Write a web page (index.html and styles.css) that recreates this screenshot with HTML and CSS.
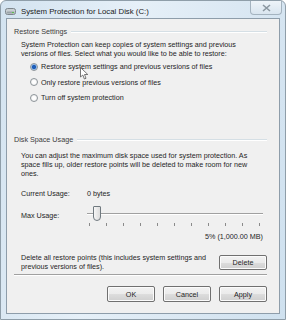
FILE: index.html
```html
<!DOCTYPE html>
<html lang="en">
<head>
    <meta charset="UTF-8">
    <title>System Protection for Local Disk (C:)</title>
    <link rel="stylesheet" href="styles.css">
</head>
<body>
    <div class="window">
        <div class="titlebar">
            <svg class="drive-icon" width="11" height="7" viewBox="0 0 11 7">
                <rect x="0.5" y="0.5" width="10" height="6" rx="2" fill="#c9cfd3" stroke="#7d868c"/>
                <rect x="1.5" y="3.5" width="8" height="2" rx="1" fill="#9aa3a8"/>
                <rect x="7" y="4" width="2" height="1" fill="#5cc04c"/>
            </svg>
            <span class="title">System Protection for Local Disk (C:)</span>
            <div class="close">
                <svg width="9" height="8" viewBox="0 0 9 8">
                    <path d="M1 1 L8 7 M8 1 L1 7" stroke="#8a96a0" stroke-width="1.6"/>
                </svg>
            </div>
        </div>

        <div class="client">
            <div class="group-head">
                <span>Restore Settings</span>
                <div class="rule"></div>
            </div>
            <p class="text">System Protection can keep copies of system settings and previous versions of files. Select what you would like to be able to restore:</p>

            <div class="options">
                <label class="option"><span class="radio checked"></span>Restore system settings and previous versions of files</label>
                <label class="option"><span class="radio"></span>Only restore previous versions of files</label>
                <label class="option"><span class="radio"></span>Turn off system protection</label>
            </div>

            <div class="group-head disk">
                <span>Disk Space Usage</span>
                <div class="rule"></div>
            </div>
            <p class="text disk-text">You can adjust the maximum disk space used for system protection. As space fills up, older restore points will be deleted to make room for new ones.</p>

            <div class="usage-row">
                <span class="field-label">Current Usage:</span>
                <span>0 bytes</span>
            </div>

            <div class="usage-row max">
                <span class="field-label">Max Usage:</span>
                <div class="slider">
                    <div class="track"></div>
                    <div class="thumb"></div>
                    <div class="ticks">
                        <i></i><i></i><i></i><i></i><i></i><i></i><i></i><i></i><i></i><i></i><i></i>
                    </div>
                </div>
            </div>
            <div class="percent">5% (1,000.00 MB)</div>

            <div class="delete-row">
                <p class="text">Delete all restore points (this includes system settings and previous versions of files).</p>
                <button class="btn">Delete</button>
            </div>

            <div class="separator"></div>

            <div class="buttons">
                <button class="btn">OK</button>
                <button class="btn">Cancel</button>
                <button class="btn">Apply</button>
            </div>
        </div>

        <svg class="cursor" width="9" height="13" viewBox="0 0 9 13">
            <path d="M0.5 0.5 L0.5 10 L2.8 8 L4.4 12 L6 11.3 L4.5 7.5 L7.8 7.5 Z" fill="#fff" stroke="#555" stroke-width="0.8"/>
        </svg>
    </div>
</body>
</html>
```

FILE: styles.css
```css
* {
    margin: 0;
    padding: 0;
    box-sizing: border-box;
}

body {
    font-family: 'Liberation Sans', Arial, sans-serif;
    font-size: 7.2px;
    color: #1e1e1e;
    background: #ffffff;
}

.window {
    position: relative;
    width: 286px;
    height: 320px;
    background: linear-gradient(100deg, #d3e3f0 0%, #e6f0f8 40%, #dbe8f3 70%, #cfe1ef 100%);
    border: 1px solid #8f9ea9;
    border-radius: 6px 6px 0 0;
    display: flex;
    flex-direction: column;
}

.titlebar {
    height: 17px;
    display: flex;
    align-items: center;
    padding-left: 4px;
}

.drive-icon {
    margin-top: 3px;
}

.title {
    margin-left: 5px;
    margin-top: 3px;
    font-size: 7.8px;
    color: #1a1a1a;
}

.close {
    margin-left: auto;
    margin-right: 3px;
    align-self: flex-start;
    width: 32px;
    height: 14px;
    border: 1px solid #a4b3bf;
    border-top: none;
    border-radius: 0 0 4px 4px;
    background: linear-gradient(#eef4f9, #d9e5ef);
    display: flex;
    align-items: center;
    justify-content: center;
}

.client {
    margin: 0 5px 0 5px;
    height: 296px;
    background: #f0f0f0;
    border: 1px solid #8e9daa;
    padding: 8px 12px 0 7px;
    display: flex;
    flex-direction: column;
}

.group-head {
    display: flex;
    align-items: center;
    height: 9px;
    color: #3c3c3c;
}

.group-head .rule {
    flex: 1;
    margin-left: 4px;
    border-top: 1px solid #d5dfe5;
    border-bottom: 1px solid #ffffff;
}

.text {
    margin-left: 7px;
    margin-top: 4px;
    max-width: 233px;
    line-height: 9px;
    color: #1e1e1e;
}

.disk-text {
    margin-top: 7px;
}

.options {
    margin-top: 4px;
    margin-left: 16px;
    display: flex;
    flex-direction: column;
    gap: 6.5px;
}

.option {
    display: flex;
    align-items: center;
    height: 9px;
}

.radio {
    width: 8px;
    height: 8px;
    border-radius: 50%;
    border: 1px solid #8d9499;
    background: radial-gradient(circle, #ffffff 30%, #e4e6e8 100%);
    margin-right: 3px;
}

.radio.checked {
    background: radial-gradient(circle, #1d5db8 0 1.8px, #8fb9ea 2.4px, #e7eef6 100%);
}

.group-head.disk {
    margin-top: 33px;
}

.usage-row {
    display: flex;
    align-items: center;
    margin-left: 7px;
    margin-top: 11px;
    height: 9px;
}

.field-label {
    width: 66px;
}

.usage-row.max {
    margin-top: 8px;
    height: 18px;
    align-items: flex-start;
}

.usage-row.max .field-label {
    margin-top: 5px;
}

.slider {
    position: relative;
    width: 176px;
    height: 18px;
}

.track {
    position: absolute;
    left: 0;
    right: 0;
    top: 7px;
    height: 2px;
    border-top: 1px solid #a0a0a0;
    border-bottom: 1px solid #ffffff;
    background: #e3e3e3;
}

.thumb {
    position: absolute;
    left: 6px;
    top: 0;
    width: 8px;
    height: 15px;
    border: 1px solid #70797f;
    border-radius: 1px 1px 4px 4px;
    background: linear-gradient(90deg, #f6f6f6, #dcdcdc);
}

.ticks {
    position: absolute;
    left: 2px;
    right: 3px;
    top: 17px;
    display: flex;
    justify-content: space-between;
}

.ticks i {
    width: 1px;
    height: 3px;
    background: #8a8a8a;
}

.percent {
    margin-top: 8px;
    text-align: right;
    padding-right: 4px;
    height: 9px;
}

.delete-row {
    display: flex;
    align-items: flex-start;
    margin-top: 11px;
}

.delete-row .text {
    margin-top: 1px;
    flex: 1;
}

.delete-row .btn {
    margin-top: 3px;
}

.btn {
    font-family: inherit;
    font-size: 7.2px;
    color: #1e1e1e;
    width: 48px;
    height: 15px;
    border: 1px solid #707070;
    border-radius: 2px;
    background: linear-gradient(#f2f2f2 0%, #ebebeb 50%, #dddddd 51%, #cfcfcf 100%);
    box-shadow: inset 0 0 0 1px #fbfbfb;
}

.separator {
    margin-top: 3px;
    border-top: 1px solid #a0a0a0;
    border-bottom: 1px solid #ffffff;
}

.buttons {
    margin-top: 10px;
    display: flex;
    justify-content: flex-end;
    gap: 8px;
}

.buttons .btn {
    height: 16px;
}

.cursor {
    position: absolute;
    left: 79px;
    top: 66px;
}
```
